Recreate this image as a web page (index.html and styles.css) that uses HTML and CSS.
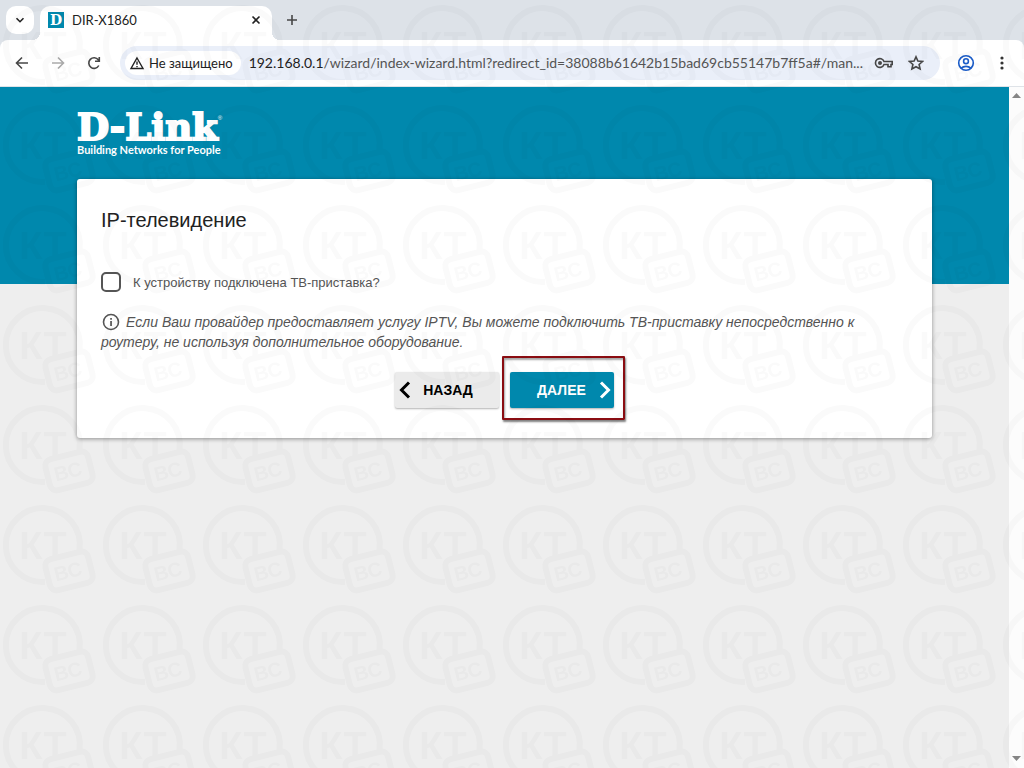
FILE: index.html
```html
<!DOCTYPE html>
<html lang="ru">
<head>
<meta charset="utf-8">
<meta name="viewport" content="width=device-width, initial-scale=1">
<title>DIR-X1860</title>
<link rel="stylesheet" href="styles.css">
</head>
<body>
<div class="window">
  <header class="tabstrip">
    <button class="tab-search" aria-label="Поиск вкладок">
      <svg width="12" height="12" viewBox="0 0 12 12"><path d="M2.500 4.200 6 7.700l3.500-3.500" class="line dark"/></svg>
    </button>
    <div class="tab">
      <svg class="favicon" width="16" height="16" viewBox="0 0 16 16"><rect width="16" height="16" fill="#0088ad"/><text x="2" y="13" class="favicon-letter">D</text></svg>
      <span class="tab-title">DIR-X1860</span>
      <button class="icon-button tab-close" aria-label="Закрыть вкладку">
        <svg width="10" height="10" viewBox="0 0 10 10"><path d="M1.500 1.500l7 7M8.500 1.500l-7 7" class="line dark"/></svg>
      </button>
    </div>
    <button class="icon-button tab-new" aria-label="Новая вкладка">
      <svg width="12" height="12" viewBox="0 0 12 12"><path d="M6 1v10M1 6h10" class="line"/></svg>
    </button>
  </header>

  <nav class="toolbar">
    <div class="nav-buttons">
      <button class="icon-button" aria-label="Назад"><svg width="16" height="16" viewBox="0 0 16 16"><path d="M14 8H3M8 2.500 2.500 8 8 13.500" class="line"/></svg></button>
      <button class="icon-button" aria-label="Вперёд" disabled><svg width="16" height="16" viewBox="0 0 16 16"><path d="M2 8h11M8 2.500 13.500 8 8 13.500" class="line faded"/></svg></button>
      <button class="icon-button" aria-label="Обновить"><svg width="16" height="16" viewBox="0 0 16 16"><path d="M12.800 10.500A5.300 5.300 0 1 1 12.300 4.800L13 5.700M13.300 2v4.300H9" class="line"/></svg></button>
    </div>
    <div class="omnibox">
      <button class="security">
        <svg width="16" height="14" viewBox="0 0 16 14"><path d="M8 2 14 12.500H2Z" class="line dark thin"/><path d="M8 5.500v3.300M8 10v1.300" class="line dark thin"/></svg>
        Не защищено
      </button>
      <a class="url" href="#"><span class="host">192.168.0.1</span>/wizard/index-wizard.html?redirect_id=38088b61642b15bad69cb55147b7ff5a#/man...</a>
      <button class="icon-button" aria-label="Пароли"><svg width="20" height="14" viewBox="0 0 20 14"><path d="M10 5.500H18.200V8.500H17V10.700H14V8.500H10A4.400 4.400 0 1 1 10 5.500Z" class="line"/><circle cx="6" cy="7" r="2" fill="#474747"/></svg></button>
      <button class="icon-button" aria-label="Добавить в закладки"><svg width="16" height="16" viewBox="0 0 16 16"><path d="M8 1.800 9.900 6l4.600.500-3.400 3 1 4.500L8 11.700 3.900 14l1-4.500-3.400-3L6.100 6Z" class="line"/></svg></button>
    </div>
    <button class="icon-button profile" aria-label="Профиль"><svg width="18" height="18" viewBox="0 0 18 18"><circle cx="9" cy="9" r="7.300" class="line blue"/><circle cx="9" cy="7.200" r="2.400" class="line blue"/><path d="M4.200 14.200c2.500-2.400 7.100-2.400 9.600 0" class="line blue"/></svg></button>
    <button class="icon-button" aria-label="Меню"><svg width="6" height="16" viewBox="0 0 6 16" fill="#333"><circle cx="3" cy="3" r="1.600"/><circle cx="3" cy="8" r="1.600"/><circle cx="3" cy="13" r="1.600"/></svg></button>
  </nav>

  <div class="viewport">
    <main class="page">
      <a class="brand" href="#">
        <span class="brand-name">D-Link<sup class="brand-mark">®</sup></span>
        <span class="brand-slogan">Building Networks for People</span>
      </a>
      <section class="card">
        <h1 class="card-title">IP-телевидение</h1>
        <label class="option" for="stb"><input class="checkbox" type="checkbox" id="stb">К устройству подключена ТВ-приставка?</label>
        <p class="hint"><svg class="hint-icon" width="20" height="20" viewBox="0 0 20 20"><circle cx="10" cy="10" r="7.500" fill="none" stroke="#555" stroke-width="1.600"/><path d="M9.200 9h1.700v5H9.200zM9.200 6h1.700v1.700H9.200z" fill="#555"/></svg>Если Ваш провайдер предоставляет услугу IPTV, Вы можете подключить ТВ-приставку непосредственно к роутеру, не используя дополнительное оборудование.</p>
        <div class="actions">
          <button class="button back"><svg width="12" height="18" viewBox="0 0 12 18"><path d="M10 1.500 2.500 9l7.500 7.500" class="chevron"/></svg><span class="button-text">НАЗАД</span></button>
          <div class="highlighted">
            <button class="button next"><span class="button-text">ДАЛЕЕ</span><svg width="12" height="18" viewBox="0 0 12 18"><path d="M2 1.500 9.500 9 2 16.500" class="chevron"/></svg></button>
          </div>
        </div>
      </section>
    </main>
    <div class="scrollbar">
      <svg width="9" height="5" viewBox="0 0 9 5"><path d="M0 5 4.500 0 9 5Z" fill="#858585"/></svg>
      <svg width="9" height="5" viewBox="0 0 9 5"><path d="M0 0h9L4.500 5Z" fill="#858585"/></svg>
    </div>
  </div>
</div>

<svg class="watermark" aria-hidden="true">
  <defs>
    <pattern id="stamp" width="100" height="100" patternUnits="userSpaceOnUse">
      <path d="M45 82A37 37 0 1 1 79.500 50" class="stamp-line"/>
      <g transform="rotate(-14 69 71)">
        <rect x="47" y="55" width="44" height="32" rx="7" class="stamp-line"/>
        <text x="68" y="78" class="stamp-small">ВС</text>
      </g>
      <clipPath id="stamp-clip"><path d="M0 0H100V49L80 49 44 58V100H0Z"/></clipPath>
      <text x="43" y="59" class="stamp-big" clip-path="url(#stamp-clip)">КТ</text>
    </pattern>
  </defs>
  <rect width="100%" height="100%" fill="url(#stamp)"/>
</svg>
</body>
</html>
```
FILE: styles.css
```css
* { box-sizing: border-box; }

body {
  margin: 0;
  font-family: "Liberation Sans", Arial, sans-serif;
  color: #222;
}

button {
  border: 0;
  padding: 0;
  background: none;
  font: inherit;
  color: inherit;
}

a { color: inherit; text-decoration: none; }
svg { flex: none; }

.window {
  display: flex;
  flex-direction: column;
  height: 100vh;
  background: #dde2e8;
}

.line { fill: none; stroke: #474747; stroke-width: 1.6; }
.line.dark { stroke: #222; }
.line.thin { stroke-width: 1.4; }
.line.faded { stroke: #aaa; }
.line.blue { stroke: #1a5cc8; }

.icon-button {
  display: grid;
  place-items: center;
  flex: none;
}

.tabstrip {
  display: flex;
  align-items: flex-end;
  gap: 6px;
  height: 40px;
  padding: 0 6px;
  font: 13px/20px Lato, sans-serif;
}

.tab-search {
  display: grid;
  place-items: center;
  width: 28px;
  height: 28px;
  margin-bottom: 6px;
  border-radius: 10px;
  background: #fff;
}

.tab {
  position: relative;
  display: flex;
  align-items: center;
  gap: 8px;
  width: 232px;
  height: 34px;
  padding: 0 8px 6px;
  border-radius: 10px 10px 0 0;
  background: #fff;
}

.tab::before,
.tab::after {
  content: "";
  position: absolute;
  bottom: 0;
  width: 8px;
  height: 8px;
}

.tab::before {
  right: 100%;
  background: radial-gradient(circle at 0 0, transparent 8px, #fff 8px);
}

.tab::after {
  left: 100%;
  background: radial-gradient(circle at 100% 0, transparent 8px, #fff 8px);
}

.favicon-letter {
  font: bold 14px "DejaVu Serif", serif;
  fill: #fff;
}

.tab-title { flex: 1; }
.tab-close { width: 16px; height: 16px; }
.tab-new { width: 28px; height: 28px; margin-bottom: 6px; }

.toolbar {
  display: flex;
  align-items: center;
  gap: 8px;
  height: 47px;
  padding: 0 8px;
  border-bottom: 1px solid #dfe3e8;
  border-radius: 8px 8px 0 0;
  background: #fff;
  font: 14px/20px Lato, sans-serif;
}

.toolbar .icon-button { width: 28px; height: 28px; }
.nav-buttons { display: flex; gap: 8px; margin-right: 4px; }

.omnibox {
  display: flex;
  align-items: center;
  flex: 1;
  min-width: 0;
  gap: 4px;
  height: 34px;
  padding: 0 10px 0 5px;
  border-radius: 17px;
  background: #eaeff9;
}

.security {
  display: flex;
  align-items: center;
  gap: 4px;
  flex: none;
  height: 24px;
  padding: 0 8px 0 4px;
  border-radius: 12px;
  background: #fff;
  font-size: 13px;
}

.url {
  flex: 1;
  min-width: 0;
  overflow: hidden;
  margin-left: 4px;
  white-space: nowrap;
  text-overflow: ellipsis;
  color: #555;
}

.host { color: #222; }

.toolbar .profile { margin-left: 4px; }

.viewport {
  display: flex;
  flex: 1;
  min-height: 0;
}

.page {
  flex: 1;
  padding: 22px 77px;
  overflow: hidden;
  background: linear-gradient(#0088ad 197px, #eee 197px);
}

.brand {
  display: flex;
  flex-direction: column;
  width: fit-content;
  color: #fff;
}

.brand-name {
  font: bold 37px/36px "DejaVu Serif", serif;
  -webkit-text-stroke: 2px #fff;
}

.brand-mark {
  font: 6px/6px "Liberation Sans", sans-serif;
  vertical-align: 20px;
  -webkit-text-stroke: 0;
}

.brand-slogan { font: bold 11px/10px Lato, sans-serif; }

.card {
  margin-top: 24px;
  padding: 28px 24px 30px;
  border-radius: 3px;
  background: #fff;
  box-shadow: 0 1px 4px rgba(0, 0, 0, 0.4);
}

.card-title {
  margin: 0 0 38px;
  font-size: 20px;
  font-weight: normal;
  line-height: 26px;
}

.option {
  display: flex;
  align-items: center;
  gap: 12px;
  height: 22px;
  font-size: 13px;
  color: #555;
}

.checkbox {
  appearance: none;
  width: 20px;
  height: 20px;
  margin: 0;
  border: 2px solid #555;
  border-radius: 5px;
}

.hint {
  margin: 19px 0 20px;
  font-size: 14px;
  font-style: italic;
  line-height: 20px;
  color: #555;
}

.hint-icon { margin-right: 5px; vertical-align: top; }

.actions {
  display: flex;
  justify-content: center;
  gap: 11px;
}

.button {
  display: flex;
  align-items: center;
  width: 104px;
  height: 36px;
  padding: 0 4px;
  border-radius: 2px;
  font-size: 14px;
  font-weight: bold;
  box-shadow: 0 1px 2px rgba(0, 0, 0, 0.3);
}

.button-text { flex: 1; text-align: center; }
.back { background: #ebebeb; color: #000; }
.back .button-text { padding-right: 10px; }
.next { padding-right: 3px; background: #0088ad; color: #fff; }
.next .button-text { padding-left: 10px; }

.chevron {
  fill: none;
  stroke: currentColor;
  stroke-width: 3;
}

.highlighted { position: relative; }

.highlighted::after {
  content: "";
  position: absolute;
  inset: -16px -11px -12px -8px;
  border: 2px solid #8b0d12;
  border-radius: 1px;
  box-shadow: 1px 2px 2px rgba(0, 0, 0, 0.5), inset 1px 2px 2px rgba(0, 0, 0, 0.35);
  pointer-events: none;
}

.scrollbar {
  display: flex;
  flex-direction: column;
  align-items: center;
  justify-content: space-between;
  width: 15px;
  padding: 6px 0 7px;
  background: #fcfcfc;
}

.watermark {
  position: fixed;
  inset: 0;
  width: 100%;
  height: 100%;
  opacity: 0.02;
  pointer-events: none;
}

.stamp-line {
  fill: none;
  stroke: #000;
  stroke-width: 6;
}

.stamp-big {
  font: bold 38px "Liberation Sans", sans-serif;
  text-anchor: middle;
}

.stamp-small {
  font: bold 20px "Liberation Sans", sans-serif;
  text-anchor: middle;
}
```
